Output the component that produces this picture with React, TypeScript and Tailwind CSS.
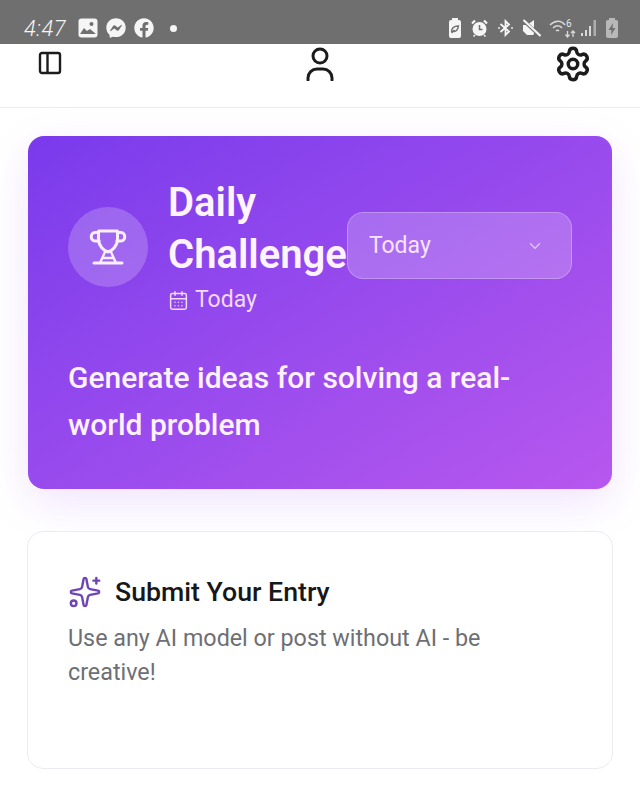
import React from 'react';
import { CalendarDays, ChevronDown, Settings, Sparkles } from 'lucide-react';
import { FaFacebook, FaFacebookMessenger } from 'react-icons/fa';

const Battery = ({ faded }: { faded?: boolean }) => (
  <svg width="14" height="20" viewBox="0 0 14 20" className={faded ? 'opacity-55' : ''}>
    <rect x="4" y="0" width="6" height="3" fill="#f5f5f5" />
    <rect x="1" y="2" width="12" height="18" rx="2" fill="#f5f5f5" />
    {faded
      ? <path d="M8 5 3.5 12h3L6 17l4.500-7h-3z" fill="#6f6f6f" />
      : <path d="M3.500 14c0-4 3-6 7-6-.5 4-3 6-5.500 5.500M3.500 15l3-3" fill="none" stroke="#6f6f6f" strokeWidth="1.400" />}
  </svg>
);

const ImageGlyph = () => (
  <svg width="20" height="20" viewBox="0 0 20 20">
    <rect width="19" height="19" x="0.500" y="0.500" rx="3" fill="#f5f5f5" />
    <circle cx="13.500" cy="6" r="2" fill="#6f6f6f" />
    <path d="M2 16l4-6 3 3 3-2 6 5z" fill="#6f6f6f" />
  </svg>
);

const AlarmGlyph = () => (
  <svg width="17" height="18" viewBox="0 0 17 18">
    <circle cx="8.500" cy="10" r="7" fill="#f5f5f5" />
    <path d="M1 4.500 4 1.500M16 4.500l-3-3" stroke="#f5f5f5" strokeWidth="2.200" />
    <path d="M8.500 6v4.500h3" fill="none" stroke="#6f6f6f" strokeWidth="1.500" />
    <path d="M4 16l-1.500 1.500M13 16l1.500 1.500" stroke="#f5f5f5" strokeWidth="1.500" />
  </svg>
);

const BluetoothGlyph = () => (
  <svg width="15" height="18" viewBox="0 0 15 18" fill="none" stroke="#f5f5f5" strokeWidth="1.800">
    <path d="M2.500 5 11 12.500 7.500 16V2L11 5.500 2.500 13" />
    <circle cx="1" cy="9" r="0.900" fill="#f5f5f5" stroke="none" />
    <circle cx="14" cy="9" r="0.900" fill="#f5f5f5" stroke="none" />
  </svg>
);

const MuteGlyph = () => (
  <svg width="19" height="18" viewBox="0 0 19 18">
    <path d="M1 6h4l7-5v14l-1 1H5L1 12z" fill="#f5f5f5" />
    <path d="M1 1l17 16" stroke="#6f6f6f" strokeWidth="3.500" />
    <path d="M1.500 1l17 16" stroke="#f5f5f5" strokeWidth="2" />
  </svg>
);

const WifiGlyph = () => (
  <svg width="27" height="20" viewBox="0 0 27 20" fill="none" stroke="#d8d8d8" strokeWidth="1.500">
    <path d="M1 7c5-5 11-5 15 0M4 10c3-3 7-3 9 0M7 13c1-1 2-1 3 0" />
    <path d="M18.500 19v-6M16.500 16.500l2 2.500 2-2.500M24 19v-6M22 15l2-2 2 2" strokeWidth="1.300" />
    <text x="17" y="9" fill="#e8e8e8" stroke="none" fontSize="10" fontFamily="Roboto, sans-serif">6</text>
  </svg>
);

const SignalGlyph = () => (
  <svg width="16" height="18" viewBox="0 0 16 18" fill="#d8d8d8">
    <rect x="0" y="14" width="2" height="3" />
    <rect x="4" y="11" width="2" height="6" />
    <rect x="8" y="7" width="2" height="10" />
    <rect x="12.500" y="1" width="2.500" height="16" opacity="0.600" />
  </svg>
);

const StatusBar = () => (
  <div className="h-11 shrink-0 bg-[#6f6f6f] flex items-center text-[#f5f5f5] pl-6 pt-[12px]">
    <span className="w-[54px] text-[22px] italic font-light tracking-[0.5px] font-['Roboto',sans-serif]">4:47</span>
    <ImageGlyph />
    <FaFacebookMessenger size={20} className="ml-2" />
    <FaFacebook size={20} className="ml-2" />
    <div className="w-[7px] h-[7px] rounded-full bg-[#f5f5f5] ml-4" />
    <div className="flex items-center ml-[271px]">
      <Battery />
      <div className="ml-[9px]"><AlarmGlyph /></div>
      <div className="ml-[10px]"><BluetoothGlyph /></div>
      <div className="ml-[9px]"><MuteGlyph /></div>
      <div className="ml-2"><WifiGlyph /></div>
      <div className="ml-[5px]"><SignalGlyph /></div>
      <div className="ml-2"><Battery faded /></div>
    </div>
  </div>
);

const PanelGlyph = () => (
  <svg width="24" height="24" viewBox="0 0 24 24" fill="none" stroke="currentColor" strokeWidth="2.400" className="ml-[38px] mt-[7px]">
    <rect x="2" y="2" width="20" height="20" rx="2" />
    <path d="M9.500 2v20" />
  </svg>
);

const PersonGlyph = () => (
  <svg width="28" height="35" viewBox="0 0 28 35" fill="none" stroke="currentColor" strokeWidth="3" strokeLinecap="round" className="ml-[244px] mt-[2px]">
    <circle cx="14" cy="10" r="7" />
    <path d="M2 34v-2a9 9 0 0 1 9-9h6a9 9 0 0 1 9 9v2" />
  </svg>
);

const Header = () => (
  <header className="h-[64px] shrink-0 bg-white border-b border-[#ececee] flex items-start text-[#1c1c1f]">
    <PanelGlyph />
    <PersonGlyph />
    <Settings size={38} strokeWidth={2.200} className="ml-[220px] mt-[1px]" />
  </header>
);

const TrophyGlyph = () => (
  <svg width="38" height="36" viewBox="0 0 38 36" fill="none" stroke="#fbeeff" strokeWidth="3" strokeLinecap="round" strokeLinejoin="round">
    <path d="M9.500 2h19v8c0 7-5.500 12-9.500 13-4-1-9.500-6-9.500-13z" />
    <path d="M9.500 3.500H6c-5 0-5 8.500 0 8.500h4M28.500 3.500H32c5 0 5 8.500 0 8.500h-4" />
    <path d="M16 23l-5 11M22 23l5 11M14 29h10" strokeWidth="2.400" />
    <path d="M5 34h28" />
  </svg>
);

const ChallengeCard = () => (
  <section className="mx-[28px] mt-[28px] h-[353px] rounded-2xl bg-linear-to-br from-[#7a3aec] to-[#b757ee] shadow-[0_14px_44px_rgba(168,85,247,0.16)] px-10 pt-[41px] text-white font-['Roboto',sans-serif]">
    <div className="flex items-center">
      <div className="w-20 h-20 rounded-full bg-white/20 flex items-center justify-center shrink-0">
        <TrophyGlyph />
      </div>
      <div className="ml-5 w-[179px]">
        <h1 className="text-[40px] leading-[52px] font-semibold text-[#fdf4ff]">Daily Challenge</h1>
        <div className="flex items-center gap-[6px] mt-[3px] text-[#f3d8ff] text-[23px] leading-[32px]">
          <CalendarDays size={21} strokeWidth={1.700} />
          <span>Today</span>
        </div>
      </div>
      <div className="w-[226px] h-[67px] -mt-[2px] rounded-2xl border border-white/25 bg-white/20 flex items-center justify-between pl-[21px] pr-[27px] text-[#f8e3ff]">
        <span className="text-[23px] leading-[32px]">Today</span>
        <ChevronDown size={18} strokeWidth={2} className="opacity-70" />
      </div>
    </div>
    <p className="mt-[38px] text-[30px] leading-[47px] font-medium text-[#fbf1ff]">Generate ideas for solving a real-world problem</p>
  </section>
);

const SubmitCard = () => (
  <section className="mx-[27px] mt-[42px] h-[238px] rounded-2xl bg-white border border-[#ececf0] px-10 pt-[40px] font-['Roboto',sans-serif]">
    <div className="flex items-center gap-[13px]">
      <Sparkles size={34} strokeWidth={1.700} className="text-[#6f45b5]" />
      <h2 className="text-[26.700px] leading-[40px] font-medium text-[#17171a]">Submit Your Entry</h2>
    </div>
    <p className="mt-[9px] text-[23.300px] leading-[34px] text-[#6d6f75]">Use any AI model or post without AI - be creative!</p>
  </section>
);

export default function App() {
  return (
    <div className="w-[640px] h-[797px] overflow-hidden flex flex-col bg-white">
      <StatusBar />
      <Header />
      <ChallengeCard />
      <SubmitCard />
    </div>
  );
}
